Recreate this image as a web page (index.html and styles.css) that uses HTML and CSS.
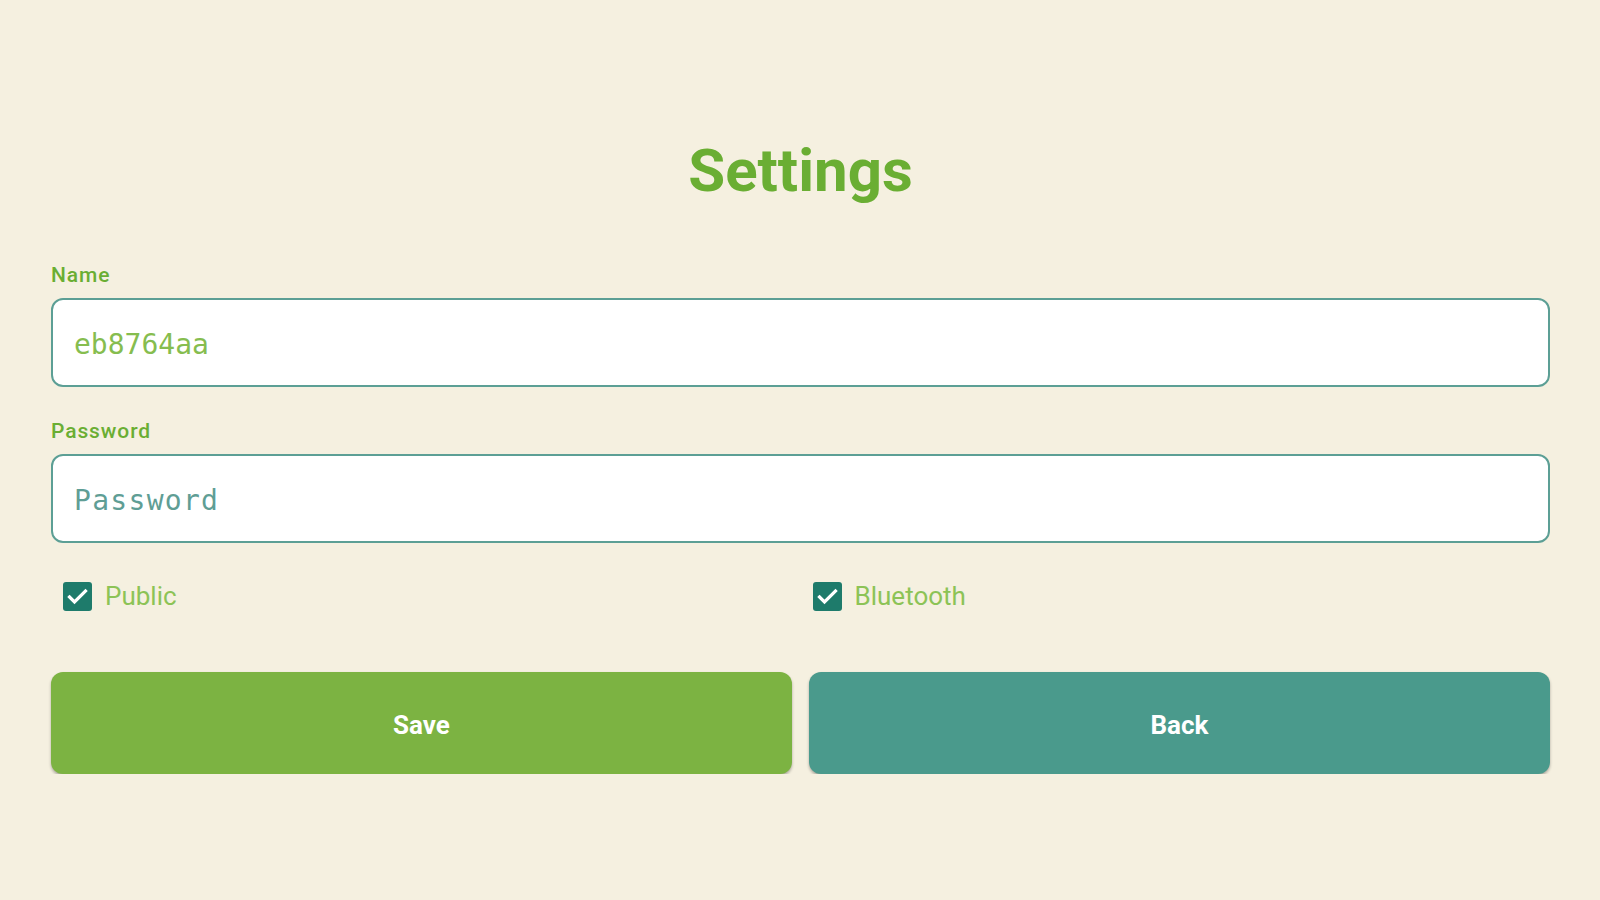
FILE: index.html
```
<!DOCTYPE html>
<html lang="en">
<head>
<meta charset="utf-8">
<title>Settings</title>
<link rel="stylesheet" href="styles.css">
</head>
<body>
<main class="page">
  <h1 class="title">Settings</h1>
  <div class="field">
    <label class="field-label" for="name">Name</label>
    <input class="field-input" id="name" type="text" value="eb8764aa">
  </div>
  <div class="field">
    <label class="field-label" for="password">Password</label>
    <input class="field-input field-input--password" id="password" type="password" placeholder="Password">
  </div>
  <div class="checks">
    <label class="check">
      <span class="check-box"><svg viewBox="0 0 29 29" width="29" height="29"><polyline points="6.5,15 11.5,20 22.5,9" fill="none" stroke="#ffffff" stroke-width="3.2" stroke-linecap="square"/></svg></span>
      <span class="check-text">Public</span>
    </label>
    <label class="check">
      <span class="check-box"><svg viewBox="0 0 29 29" width="29" height="29"><polyline points="6.5,15 11.5,20 22.5,9" fill="none" stroke="#ffffff" stroke-width="3.2" stroke-linecap="square"/></svg></span>
      <span class="check-text">Bluetooth</span>
    </label>
  </div>
  <div class="actions">
    <button class="btn btn--save" type="button">Save</button>
    <button class="btn btn--back" type="button">Back</button>
  </div>
</main>
</body>
</html>
```
FILE: styles.css
```
html, body {
  margin: 0;
  padding: 0;
  background: #f5f0e0;
}
body {
  font-family: Roboto, "Liberation Sans", sans-serif;
}
.page {
  display: flex;
  flex-direction: column;
  padding: 136px 50px 0 51px;
}
.title {
  margin: 0;
  text-align: center;
  font-size: 60px;
  line-height: 70px;
  font-weight: 700;
  color: #6aae33;
}
.field {
  display: flex;
  flex-direction: column;
  gap: 11px;
  margin-top: 32px;
}
.title + .field {
  margin-top: 57px;
}
.field-label {
  font-size: 21px;
  line-height: 24px;
  font-weight: 500;
  letter-spacing: 0.9px;
  color: #6aae33;
}
.field-input {
  box-sizing: border-box;
  height: 89px;
  width: 100%;
  margin: 0;
  padding: 4px 21px 0;
  border: 2px solid #5c9f95;
  border-radius: 12px;
  background: #ffffff;
  font-family: "DejaVu Sans Mono", "Liberation Mono", monospace;
  font-size: 28px;
  color: #86bd4f;
  outline: none;
}
.field-input--password::placeholder {
  color: #5f9e95;
  letter-spacing: 1.3px;
  opacity: 1;
}
.checks {
  display: grid;
  grid-template-columns: 1fr 1fr;
  margin-top: 33px;
  height: 40px;
}
.check {
  display: flex;
  align-items: center;
  gap: 13px;
  padding-left: 12px;
}
.check-box {
  display: block;
  width: 29px;
  height: 29px;
  border-radius: 3px;
  background: #1e7b6b;
}
.check-box svg {
  display: block;
}
.check-text {
  font-size: 26px;
  color: #8cc356;
}
.actions {
  display: grid;
  grid-template-columns: 1fr 1fr;
  gap: 17px;
  margin-top: 56px;
}
.btn {
  height: 102px;
  margin: 0;
  padding: 4px 0 0;
  border: none;
  border-radius: 12px;
  font-family: Roboto, "Liberation Sans", sans-serif;
  font-size: 26px;
  font-weight: 700;
  color: #ffffff;
  box-shadow: 0 2px 3px rgba(0, 0, 0, 0.3);
}
.btn--save {
  background: #7cb342;
}
.btn--back {
  background: #4a9a8c;
}
```
